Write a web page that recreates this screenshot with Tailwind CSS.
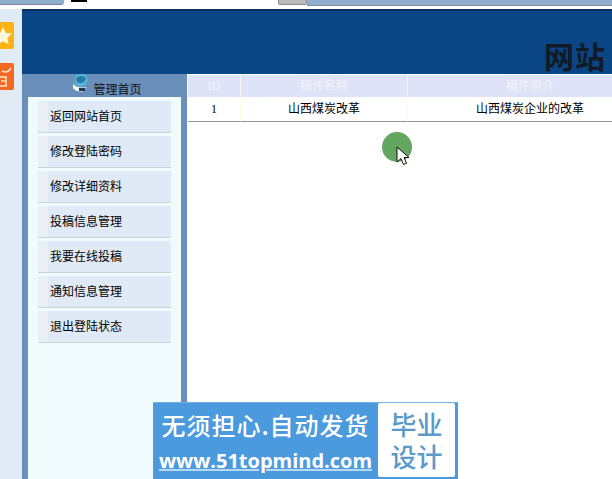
<!DOCTYPE html>
<html lang="zh">
<head>
    <meta charset="UTF-8">
    <title>管理首页</title>
    <script src="https://cdn.jsdelivr.net/npm/@tailwindcss/browser@4"></script>
</head>
<body class="relative w-[612px] h-[479px] overflow-hidden bg-white font-['Liberation_Sans','Noto_Sans_CJK_SC',sans-serif] text-[12px] text-black">
    <!-- browser tabs -->
    <div class="flex h-[9px] bg-white">
        <div class="w-[64px] h-[5px] bg-[#8fadcc] rounded-br-[3px] border-b border-[#77879a]"></div>
        <div class="w-[16px] h-[2px] ml-[7px] bg-black"></div>
        <div class="w-[191px] h-[5px]"></div>
        <div class="w-[29px] h-[5px] bg-[#b9b9bb] border border-t-0 border-[#8c8c8c] rounded-b-[2px]"></div>
        <div class="flex-1 h-[6px] bg-[#8fadcc] border-b border-[#7d8ea3]"></div>
    </div>

    <div class="flex h-[470px]">
        <!-- left toolbar -->
        <div class="w-[22px] shrink-0 bg-[#e0ebf5] flex flex-col pt-[13px] gap-[14px]">
            <div class="w-[14px] h-[27px] bg-[#fcb314] rounded-r-[2px] flex items-center overflow-hidden">
                <svg width="14" height="18" viewBox="0 0 14 18"><path d="M3 0l2.800 5.800 6.200.8-4.500 4.400 1.100 6.300-5.600-3-5.600 3 1.100-6.300-4.500-4.400 6.200-.8z" fill="#fff6dc"/></svg>
            </div>
            <div class="w-[14px] h-[27px] bg-[#f26a21] rounded-r-[2px] relative overflow-hidden">
                <svg class="absolute left-0 top-0" width="14" height="27" viewBox="0 0 14 27" fill="none" stroke="#ffe6d0" stroke-width="1.500"><path d="M2 8q5 3 9-3"/><path d="M0 14h6v9h-6M1 18h4"/></svg>
            </div>
        </div>

        <div class="flex-1 min-w-0 flex flex-col">
            <!-- header -->
            <div class="h-[65px] shrink-0 bg-[#0a4585] border-t-2 border-[#05305f] relative overflow-hidden">
                <div class="absolute left-[522px] top-[29px] whitespace-nowrap font-['Liberation_Serif','Noto_Sans_CJK_SC',serif] font-bold text-[30px] tracking-[1px] leading-[36px] text-[#111a26]">网站</div>
            </div>

            <div class="flex flex-1 min-h-0">
                <!-- sidebar -->
                <div class="w-[165px] shrink-0 bg-[#6a8fbb] px-[6px] flex flex-col">
                    <div class="h-[23px] shrink-0 flex items-center justify-center gap-[4px] pl-[4px] text-[#111]">
                        <svg width="18" height="20" viewBox="0 0 18 20" class="-mt-[5px]">
                            <circle cx="10" cy="7" r="6.500" fill="#4fb8d8"/>
                            <path d="M5 5q5-4 10 0l-2 4q-4 2-7 0z" fill="#2a78a6"/>
                            <path d="M2 11q5 5 13 3l-2 4q-7 2-11-3z" fill="#f2f6fa"/>
                            <path d="M8 15h6v3h-6z" fill="#26364d"/>
                        </svg>
                        <span class="leading-none mt-[8px]">管理首页</span>
                    </div>
                    <div class="flex-1 bg-[#effbfd] pl-[10px] pr-[10px] pt-[4px] flex flex-col gap-[3px]">
                        <a class="h-[32px] flex items-center pl-[12px] bg-[#e0eaf6] border-b border-[#c9d4d6] shadow-[inset_10px_0_0_#e8eff5]">返回网站首页</a>
                        <a class="h-[32px] flex items-center pl-[12px] bg-[#e0eaf6] border-b border-[#c9d4d6] shadow-[inset_10px_0_0_#e8eff5]">修改登陆密码</a>
                        <a class="h-[32px] flex items-center pl-[12px] bg-[#e0eaf6] border-b border-[#c9d4d6] shadow-[inset_10px_0_0_#e8eff5]">修改详细资料</a>
                        <a class="h-[32px] flex items-center pl-[12px] bg-[#e0eaf6] border-b border-[#c9d4d6] shadow-[inset_10px_0_0_#e8eff5]">投稿信息管理</a>
                        <a class="h-[32px] flex items-center pl-[12px] bg-[#e0eaf6] border-b border-[#c9d4d6] shadow-[inset_10px_0_0_#e8eff5]">我要在线投稿</a>
                        <a class="h-[32px] flex items-center pl-[12px] bg-[#e0eaf6] border-b border-[#c9d4d6] shadow-[inset_10px_0_0_#e8eff5]">通知信息管理</a>
                        <a class="h-[32px] flex items-center pl-[12px] bg-[#e0eaf6] border-b border-[#c9d4d6] shadow-[inset_10px_0_0_#e8eff5]">退出登陆状态</a>
                    </div>
                </div>

                <!-- table -->
                <div class="flex-1 min-w-0 overflow-hidden pl-px pt-px">
                    <div class="w-[464px] grid grid-cols-[53px_167px_244px]">
                        <div class="h-[22px] flex items-center justify-center bg-[#dfe3f8] text-[#f2f3fc] border-r border-[#f4f5fd] font-['Liberation_Serif',serif]">ID</div>
                        <div class="h-[22px] flex items-center justify-center bg-[#dfe3f8] text-[#f2f3fc] border-r border-[#f4f5fd]">稿件名称</div>
                        <div class="h-[22px] flex items-center justify-center bg-[#dfe3f8] text-[#f2f3fc]">稿件简介</div>
                        <div class="h-[25px] flex items-center justify-center border-r border-[#fbf9e0] border-b border-b-[#8a9a94] font-['Liberation_Serif',serif] text-[12px]">1</div>
                        <div class="h-[25px] flex items-center justify-center border-r border-[#fbf9e0] border-b border-b-[#8a9a94]">山西煤炭改革</div>
                        <div class="h-[25px] flex items-center justify-center border-b border-[#8a9a94]">山西煤炭企业的改革</div>
                    </div>
                </div>
            </div>
        </div>
    </div>

    <!-- click marker and cursor -->
    <div class="absolute left-[382px] top-[132px] w-[30px] h-[30px] rounded-full bg-[#62a660]"></div>
    <svg class="absolute left-[396px] top-[146px]" width="14" height="22" viewBox="0 0 14 22">
        <path d="M1 1v15l4-3.500 2.500 6 3-1.300-2.500-5.700h5z" fill="#fff" stroke="#111" stroke-width="1"/>
    </svg>

    <!-- watermark banner -->
    <div class="absolute left-[153px] top-[402px] w-[305px] h-[77px] bg-[#4c9ade] border-t border-[#6fb0e6] flex text-white">
        <div class="w-[225px] shrink-0 flex flex-col items-center">
            <div class="mt-[6px] text-[24px] leading-[32px] tracking-[1px] font-medium whitespace-nowrap font-['Noto_Sans_CJK_SC',sans-serif]">无须担心.自动发货</div>
            <div class="mt-[7px] text-[20px] leading-[26px] font-bold underline decoration-[#b9d8f2] whitespace-nowrap font-['Open_Sans',sans-serif]">www.51topmind.com</div>
        </div>
        <div class="w-[77px] h-[74px] bg-white rounded-[2px] flex flex-col items-center justify-center text-[#5a9ac8] text-[26px] leading-[32px] font-medium font-['Noto_Sans_CJK_SC',sans-serif]">
            <div>毕业</div>
            <div>设计</div>
        </div>
    </div>
</body>
</html>
